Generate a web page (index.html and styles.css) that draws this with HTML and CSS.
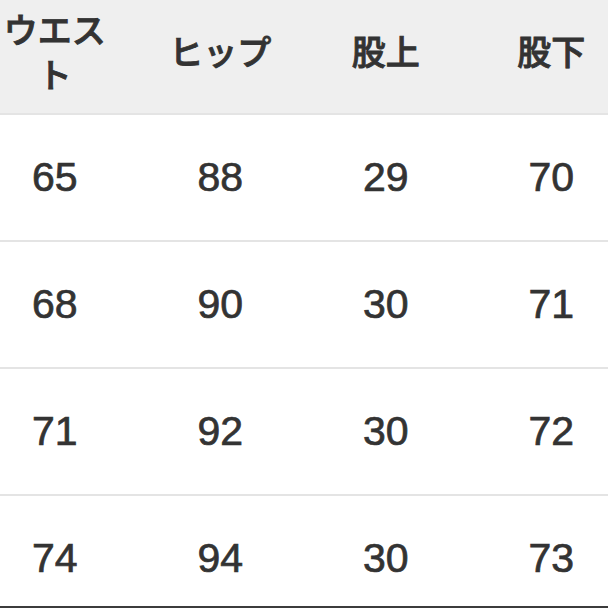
FILE: index.html
```html
<!DOCTYPE html>
<html lang="ja">
<head>
<meta charset="utf-8">
<title>サイズ表</title>
<link rel="stylesheet" href="styles.css">
</head>
<body>
<div class="frame">
  <div class="table">
    <div class="row head">
      <div class="cell">ウエスト</div>
      <div class="cell">ヒップ</div>
      <div class="cell">股上</div>
      <div class="cell">股下</div>
    </div>
    <div class="row">
      <div class="cell">65</div>
      <div class="cell">88</div>
      <div class="cell">29</div>
      <div class="cell">70</div>
    </div>
    <div class="row">
      <div class="cell">68</div>
      <div class="cell">90</div>
      <div class="cell">30</div>
      <div class="cell">71</div>
    </div>
    <div class="row">
      <div class="cell">71</div>
      <div class="cell">92</div>
      <div class="cell">30</div>
      <div class="cell">72</div>
    </div>
    <div class="row">
      <div class="cell">74</div>
      <div class="cell">94</div>
      <div class="cell">30</div>
      <div class="cell">73</div>
    </div>
  </div>
</div>
</body>
</html>
```

FILE: styles.css
```css
html, body {
  margin: 0;
  padding: 0;
  background: #ffffff;
}

.frame {
  width: 608px;
  height: 608px;
  box-sizing: border-box;
  border-bottom: 2px solid #3c3c3c;
  overflow: hidden;
}

.table {
  width: 662px;
  margin-left: -28px;
  display: flex;
  flex-direction: column;
  color: #333333;
  font-family: "Liberation Sans", "Noto Sans CJK JP", sans-serif;
}

.row {
  display: grid;
  grid-template-columns: repeat(4, 165.5px);
  height: 125px;
  border-bottom: 2px solid #e4e4e4;
  flex-shrink: 0;
}

.cell {
  display: flex;
  align-items: center;
  justify-content: center;
  text-align: center;
  padding: 0 16px;
  font-size: 41px;
  line-height: 1;
  -webkit-text-stroke: 0.7px #333333;
}

.head {
  height: 113px;
  background: #efefef;
}

.head .cell {
  font-family: "Noto Sans CJK JP", sans-serif;
  font-weight: 500;
  font-size: 34px;
  line-height: 45px;
  padding-bottom: 12px;
  -webkit-text-stroke: 0.9px #333333;
}
```
